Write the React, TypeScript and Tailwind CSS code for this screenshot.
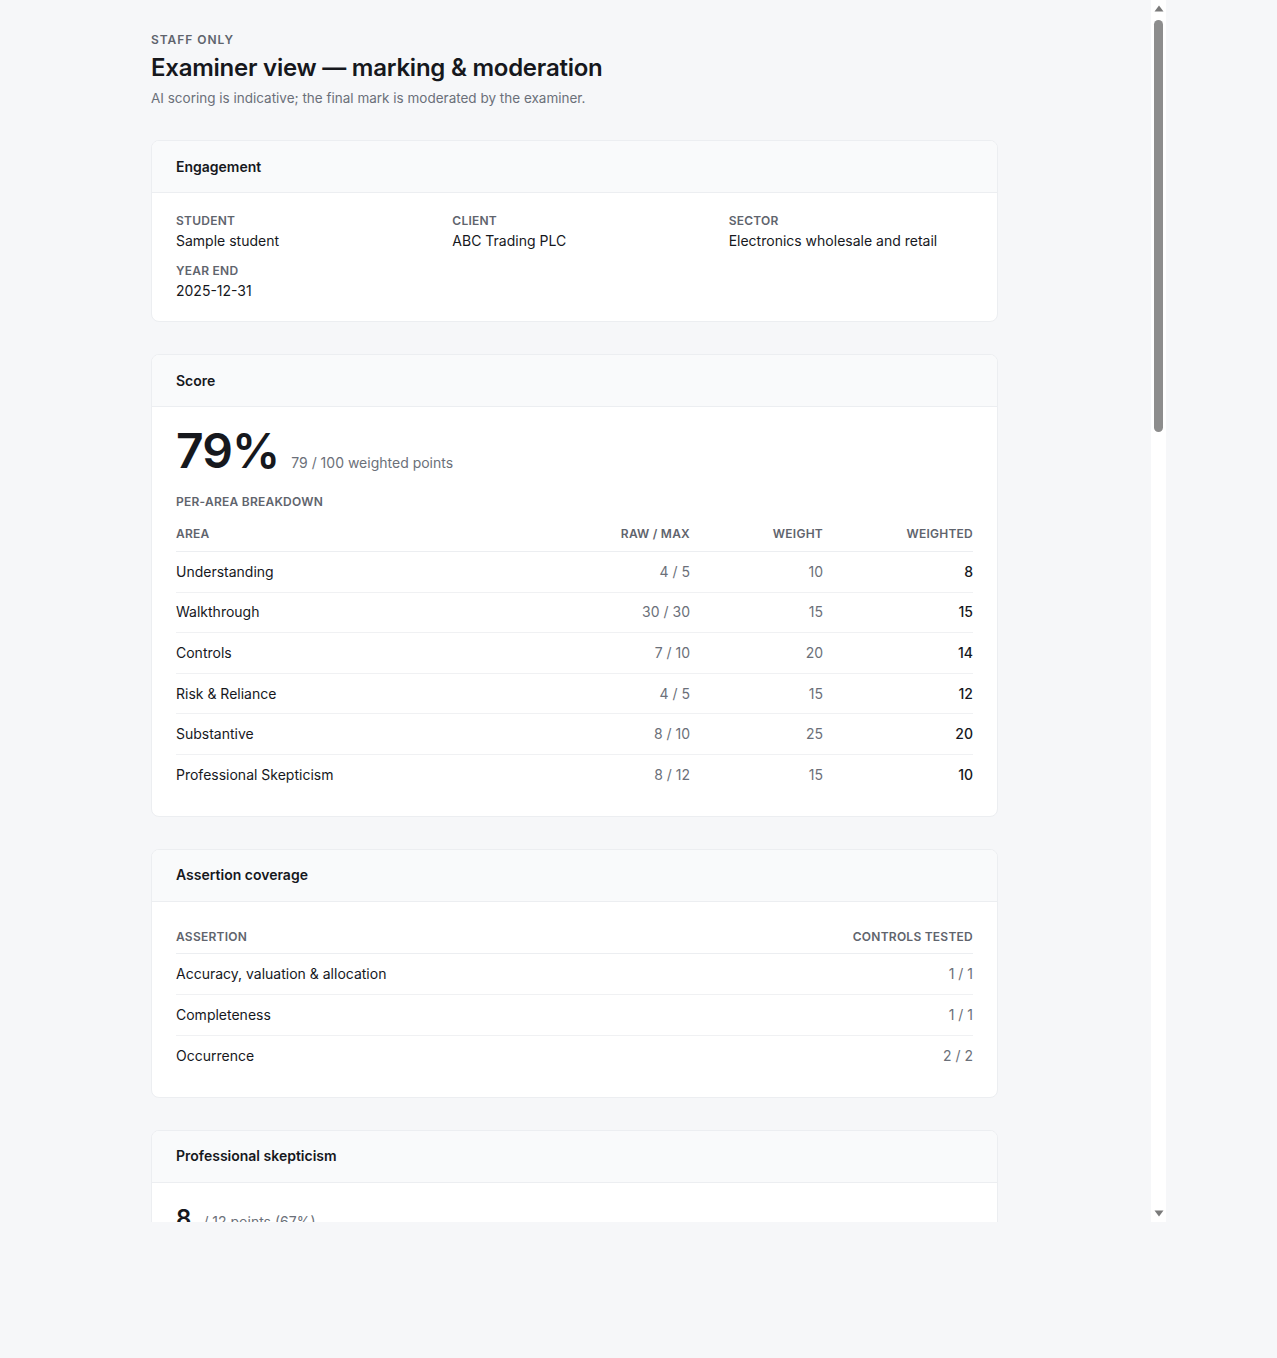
import type { ReactNode } from "react";

type AreaRow = { area: string; raw: string; weight: number; weighted: number };

const areas: AreaRow[] = [
  { area: "Understanding", raw: "4 / 5", weight: 10, weighted: 8 },
  { area: "Walkthrough", raw: "30 / 30", weight: 15, weighted: 15 },
  { area: "Controls", raw: "7 / 10", weight: 20, weighted: 14 },
  { area: "Risk & Reliance", raw: "4 / 5", weight: 15, weighted: 12 },
  { area: "Substantive", raw: "8 / 10", weight: 25, weighted: 20 },
  { area: "Professional Skepticism", raw: "8 / 12", weight: 15, weighted: 10 }
];

const assertions = [
  { name: "Accuracy, valuation & allocation", tested: "1 / 1" },
  { name: "Completeness", tested: "1 / 1" },
  { name: "Occurrence", tested: "2 / 2" }
];

function Card({ title, children }: { title: string; children: ReactNode }) {
  return (
    <section className="overflow-hidden rounded-lg border border-[#eceef1] bg-white">
      <div className="flex h-[52px] items-center border-b border-[#eceef1] bg-[#f9fafb] px-6">
        <h2 className="text-sm font-semibold text-[#16181d]">{title}</h2>
      </div>
      <div className="px-6 pb-5 pt-5">{children}</div>
    </section>
  );
}

function Field({ label, value }: { label: string; value: string }) {
  return (
    <div>
      <p className="text-xs font-semibold uppercase leading-4 tracking-[0.02em] text-[#5f646d]">{label}</p>
      <p className="mt-0.5 text-sm leading-5 text-[#16181d]">{value}</p>
    </div>
  );
}

// classic scrollbar drawn beside the clipped page area
function Scrollbar() {
  return (
    <div className="flex h-full w-[15px] shrink-0 flex-col items-center bg-white">
      <svg className="mt-[5px]" width="10" height="7" viewBox="0 0 10 7">
        <path d="M5 0.5 L9.5 6.5 L0.5 6.5 Z" fill="#7a7a7a" />
      </svg>
      <div className="mt-[8px] h-[412px] w-[9px] rounded-full bg-[#8d8d8d]" />
      <div className="flex-1" />
      <svg className="mb-[5px]" width="10" height="7" viewBox="0 0 10 7">
        <path d="M0.5 0.5 L9.5 0.5 L5 6.5 Z" fill="#7a7a7a" />
      </svg>
    </div>
  );
}

const headCell = "text-xs font-semibold uppercase tracking-[0.02em] text-[#5f646d]";

export default function App() {
  return (
    <div className="h-[1358px] w-full bg-[#f6f7f9]" style={{ fontFamily: "Inter, 'Noto Sans', sans-serif" }}>
      <div className="flex h-[1222px] w-[1166px]">
        <div className="h-full w-[1151px] overflow-hidden">
          <main className="ml-[151px] w-[847px] pb-16 pt-8">
            <p className="text-xs font-semibold uppercase leading-4 tracking-[0.08em] text-[#5f646d]">Staff only</p>
            <h1 className="mt-1 text-2xl font-semibold leading-8 tracking-[-0.01em] text-[#16181d]">
              Examiner view — marking &amp; moderation
            </h1>
            <p className="mt-1 text-[13.5px] leading-5 text-[#6b7079]">
              AI scoring is indicative; the final mark is moderated by the examiner.
            </p>

            <div className="mt-8 flex flex-col gap-8">
              <Card title="Engagement">
                <div className="grid grid-cols-3 gap-x-8 gap-y-3">
                  <Field label="Student" value="Sample student" />
                  <Field label="Client" value="ABC Trading PLC" />
                  <Field label="Sector" value="Electronics wholesale and retail" />
                  <Field label="Year end" value="2025-12-31" />
                </div>
              </Card>

              <Card title="Score">
                <div className="flex items-baseline gap-3">
                  <span className="text-5xl font-semibold leading-none tracking-[-0.02em] text-[#16181d]">79%</span>
                  <span className="text-sm text-[#6b7079]">79 / 100 weighted points</span>
                </div>
                <p className={`mt-[19px] leading-4 ${headCell}`}>Per-area breakdown</p>
                <div className="mt-4">
                  <div className="grid h-[26px] grid-cols-[1fr_120px_133px_150px] items-start border-b border-[#eceef1] leading-4">
                    <span className={headCell}>Area</span>
                    <span className={`text-right ${headCell}`}>Raw / Max</span>
                    <span className={`text-right ${headCell}`}>Weight</span>
                    <span className={`text-right ${headCell}`}>Weighted</span>
                  </div>
                  {areas.map((row, i) => (
                    <div
                      key={row.area}
                      className={`grid h-[40.6px] grid-cols-[1fr_120px_133px_150px] items-center text-sm ${
                        i < areas.length - 1 ? "border-b border-[#f0f1f3]" : ""
                      }`}
                    >
                      <span className="text-[#16181d]">{row.area}</span>
                      <span className="text-right text-[#6b7079]">{row.raw}</span>
                      <span className="text-right text-[#6b7079]">{row.weight}</span>
                      <span className="text-right font-medium text-[#16181d]">{row.weighted}</span>
                    </div>
                  ))}
                </div>
              </Card>

              <Card title="Assertion coverage">
                <div className="pt-[7px]">
                  <div className="flex h-[25px] items-start justify-between border-b border-[#eceef1] leading-4">
                    <span className={headCell}>Assertion</span>
                    <span className={headCell}>Controls tested</span>
                  </div>
                  {assertions.map((row, i) => (
                    <div
                      key={row.name}
                      className={`flex h-[41px] items-center justify-between text-sm ${
                        i < assertions.length - 1 ? "border-b border-[#f0f1f3]" : ""
                      }`}
                    >
                      <span className="text-[#16181d]">{row.name}</span>
                      <span className="text-[#6b7079]">{row.tested}</span>
                    </div>
                  ))}
                </div>
              </Card>

              <Card title="Professional skepticism">
                <div className="flex items-baseline gap-3">
                  <span className="text-2xl font-semibold leading-8 text-[#16181d]">8</span>
                  <span className="text-sm text-[#6b7079]">/ 12 points (67%)</span>
                </div>
              </Card>
            </div>
          </main>
        </div>
        <Scrollbar />
      </div>
    </div>
  );
}
